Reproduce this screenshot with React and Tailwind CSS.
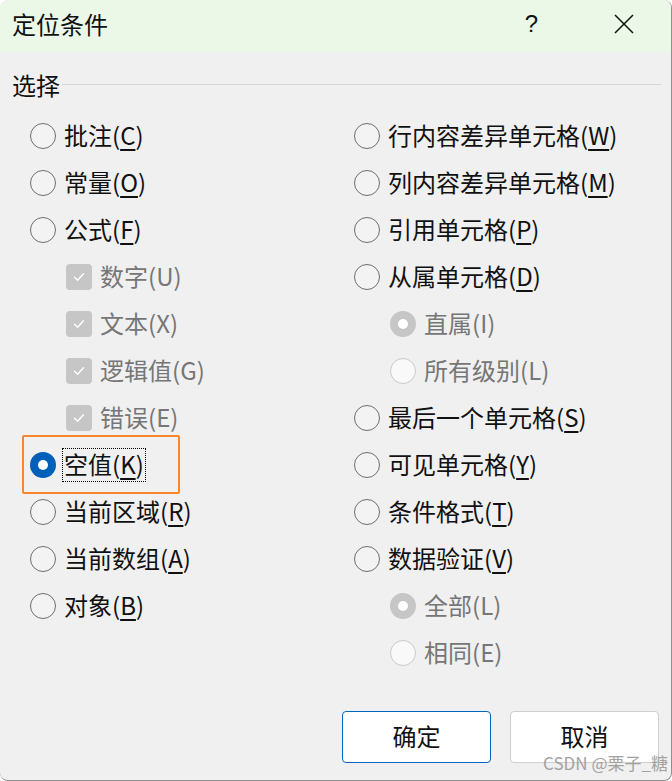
import React from "react";

const FONT = { fontFamily: '"Noto Sans CJK SC", "Noto Sans", sans-serif' };

function Radio({ state = "off", disabled = false }) {
  if (state === "on" && !disabled) {
    return (
      <span className="w-[26px] h-[26px] rounded-full bg-[#005fb8] flex items-center justify-center shrink-0">
        <span className="w-[10px] h-[10px] rounded-full bg-white" />
      </span>
    );
  }
  if (state === "on" && disabled) {
    return (
      <span className="w-[26px] h-[26px] rounded-full bg-[#c6c6c6] flex items-center justify-center shrink-0">
        <span className="w-[10px] h-[10px] rounded-full bg-white" />
      </span>
    );
  }
  if (disabled) {
    return <span className="w-[26px] h-[26px] rounded-full border-[1.5px] border-[#c9c9c9] bg-[#f9f9f9] shrink-0" />;
  }
  return <span className="w-[26px] h-[26px] rounded-full border-[1.5px] border-[#6e6e6e] bg-[#f3f3f3] shrink-0" />;
}

function Check() {
  return (
    <span className="w-[26px] h-[26px] rounded-[4px] bg-[#c6c6c6] flex items-center justify-center shrink-0">
      <svg width="14" height="14" viewBox="0 0 14 14" fill="none">
        <path d="M2.5 7.3 L5.6 10.2 L11.5 3.8" stroke="white" strokeWidth="1.4" strokeLinecap="round" strokeLinejoin="round" />
      </svg>
    </span>
  );
}

function Label({ text, k, disabled }) {
  return (
    <span className={"mt-[-2px] " + (disabled ? "text-[#767676]" : "text-[#111]")}>
      {text}(
      {disabled ? k : <span className="underline underline-offset-[4px] decoration-[1.5px]">{k}</span>})
    </span>
  );
}

function Row({ control, text, k, disabled, indent = false, children }) {
  return (
    <div className={"h-[47px] flex items-center gap-[8px] " + (indent ? "pl-[36px]" : "")}>
      {control}
      {children || <Label text={text} k={k} disabled={disabled} />}
    </div>
  );
}

export default function App() {
  return (
    <div className="w-[672px] h-[781px] bg-white relative overflow-hidden" style={FONT}>
      <div className="w-[672px] h-[781px] bg-[#f0f0f0] rounded-[8px] border-r border-b border-[#8f8f8f] overflow-hidden flex flex-col">
        {/* title bar */}
        <div className="h-[52px] bg-[#ebf8e7] flex items-center pl-[12px] shrink-0">
          <div className="text-[24px] text-[#111] leading-none mt-[-4px]">定位条件</div>
          <div className="flex-1" />
          <div className="text-[24px] text-[#111] leading-none mr-[76px] mt-[-4px]" style={{ fontFamily: '"Liberation Sans", sans-serif' }}>?</div>
          <svg width="20" height="20" viewBox="0 0 20 20" className="mr-[37px] mt-[-4px]">
            <path d="M1 1 L19 19 M19 1 L1 19" stroke="#111" strokeWidth="1.5" />
          </svg>
        </div>

        {/* group header */}
        <div className="mt-[21px] h-[24px] flex items-center pl-[12px] pr-[10px]">
          <span className="text-[24px] text-[#111] leading-none">选择</span>
          <span className="flex-1 h-px bg-[#d6d6d6] ml-[2px] mt-[-2px]" />
        </div>

        {/* options */}
        <div className="mt-[15px] grid grid-cols-[324px_1fr] pl-[30px] text-[24px] leading-none">
          <div className="flex flex-col">
            <Row control={<Radio />} text="批注" k="C" />
            <Row control={<Radio />} text="常量" k="O" />
            <Row control={<Radio />} text="公式" k="F" />
            <Row indent control={<Check />} text="数字" k="U" disabled />
            <Row indent control={<Check />} text="文本" k="X" disabled />
            <Row indent control={<Check />} text="逻辑值" k="G" disabled />
            <Row indent control={<Check />} text="错误" k="E" disabled />
            <div className="relative">
              <Row control={<Radio state="on" />}>
                <span className="h-[34px] flex items-center border border-dotted border-black px-[1px] ml-[-2px] text-[#111]">
                  <span className="mt-[-2px]">
                    空值(<span className="underline underline-offset-[4px] decoration-[1.5px]">K</span>)
                  </span>
                </span>
              </Row>
              <span className="absolute left-[-8px] top-[-6px] w-[158px] h-[59px] border-2 border-[#f7862f] rounded-[2px] pointer-events-none" />
            </div>
            <Row control={<Radio />} text="当前区域" k="R" />
            <Row control={<Radio />} text="当前数组" k="A" />
            <Row control={<Radio />} text="对象" k="B" />
          </div>
          <div className="flex flex-col">
            <Row control={<Radio />} text="行内容差异单元格" k="W" />
            <Row control={<Radio />} text="列内容差异单元格" k="M" />
            <Row control={<Radio />} text="引用单元格" k="P" />
            <Row control={<Radio />} text="从属单元格" k="D" />
            <Row indent control={<Radio state="on" disabled />} text="直属" k="I" disabled />
            <Row indent control={<Radio disabled />} text="所有级别" k="L" disabled />
            <Row control={<Radio />} text="最后一个单元格" k="S" />
            <Row control={<Radio />} text="可见单元格" k="Y" />
            <Row control={<Radio />} text="条件格式" k="T" />
            <Row control={<Radio />} text="数据验证" k="V" />
            <Row indent control={<Radio state="on" disabled />} text="全部" k="L" disabled />
            <Row indent control={<Radio disabled />} text="相同" k="E" disabled />
          </div>
        </div>

        {/* buttons */}
        <div className="mt-[35px] flex justify-end gap-[19px] pr-[12px]">
          <button className="w-[149px] h-[52px] bg-white border border-[#0067c0] rounded-[4px] text-[24px] text-[#111] flex items-center justify-center leading-none pb-[3px]">
            确定
          </button>
          <button className="w-[149px] h-[52px] bg-white border border-[#cfcfcf] rounded-[4px] text-[24px] text-[#111] flex items-center justify-center leading-none pb-[3px]">
            取消
          </button>
        </div>
      </div>
      <span className="absolute right-[4px] top-[754px] text-[17px] text-[#9a9a9a] leading-none opacity-90">
        CSDN @栗子_糖
      </span>
    </div>
  );
}
